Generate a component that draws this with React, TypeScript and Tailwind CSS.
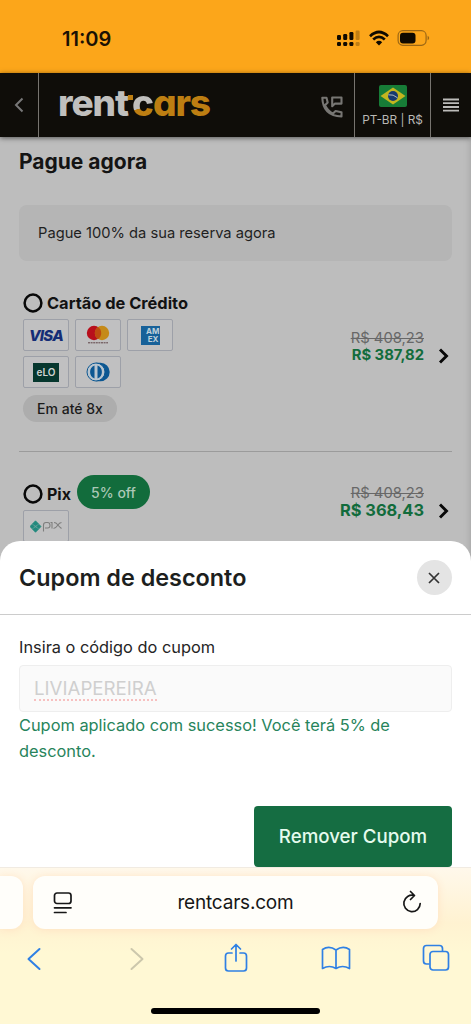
import type { ReactNode } from "react";

function StatusBar() {
  return (
    <div className="flex h-[73px] items-start justify-between bg-[#fca61a] pl-[62px] pr-[41px] pt-[26px]">
      <span className="text-[20px] font-semibold leading-[26px] text-[#1a1104]">11:09</span>
      <svg width="93" height="24" viewBox="0 0 93 24" fill="#100a00">
        <g>
          <rect x="0" y="9" width="4" height="5" rx="1.2" />
          <rect x="6.200" y="8" width="4" height="6" rx="1.2" />
          <rect x="12.400" y="6" width="4" height="8" rx="1.2" />
          <rect x="0" y="16" width="4" height="4" rx="1.2" />
          <rect x="6.200" y="16" width="4" height="4" rx="1.2" />
          <rect x="12.400" y="16" width="4" height="4" rx="1.2" />
          <rect x="18.600" y="4.500" width="4" height="9.500" rx="1.200" opacity=".25" />
          <rect x="18.600" y="16" width="4" height="4" rx="1.200" opacity=".25" />
        </g>
        <g fill="none" stroke="#100a00" strokeWidth="2.700">
          <path d="M33 10.200Q42 1.800 51 10.200" />
          <path d="M36.200 13.600Q42 8.200 47.800 13.600" />
        </g>
        <path d="M38.800 16.200Q42 13.400 45.200 16.200L42 19.500Z" />
        <rect x="61.100" y="4.700" width="28" height="14.600" rx="4.700" fill="none" stroke="#9b6715" strokeWidth="1.200" />
        <rect x="63" y="6.700" width="15.500" height="10.700" rx="3" />
        <path d="M90.600 9.700v4.600q1.600-.7 1.600-2.300t-1.600-2.300z" fill="#9b6715" />
      </svg>
    </div>
  );
}

function BrazilFlag() {
  return (
    <svg width="28" height="22" viewBox="0 0 28 22">
      <rect width="28" height="22" rx="2" fill="#177c37" />
      <path d="M14 2.500 26.500 11 14 19.500 1.500 11Z" fill="#c3b51f" />
      <circle cx="14" cy="11" r="5" fill="#173a70" />
      <path d="M9.300 9.800q5-.8 9.200 3" fill="none" stroke="#aeb9c0" strokeWidth="1" />
    </svg>
  );
}

function PhoneMessage() {
  return (
    <svg width="22" height="22" viewBox="0 0 22 22" fill="none" stroke="#777673" strokeWidth="2.100" strokeLinejoin="round">
      <path d="M1.300 1.700H5.500L6.700 6.500 4 9.200Q6.500 14.800 12 17.600L14.600 15 20.500 16.300V20.500Q2 19.800 1.300 1.700Z" />
      <path d="M11.200 1.500H20.500V7.600H14L11.200 10.200Z" />
    </svg>
  );
}

function Header() {
  return (
    <header className="relative z-10 flex h-[64px] bg-[#0f0d09] shadow-[0_1px_5px_rgba(0,0,0,0.55)]">
      <div className="flex w-[39px] items-center justify-center border-r border-[#77746f] pr-px">
        <svg width="10" height="16" viewBox="0 0 10 16" fill="none" stroke="#777" strokeWidth="2">
          <path d="M8.500 1.500 2 8l6.500 6.500" />
        </svg>
      </div>
      <div className="ml-[19px] flex-1 pt-[7px] text-[37px] font-extrabold leading-[46px] tracking-[-1.1px] text-[#c0bfbd]">
        <span className="relative inline-block whitespace-nowrap [font-feature-settings:'cv11']">
          rent
          <span className="ml-[4px] bg-[linear-gradient(165deg,#c0bfbd_0%,#c0bfbd_60%,#bd7e12_61%)] bg-clip-text text-transparent">c</span>
          <span className="text-[#bd7e12]">ars</span>
          <i className="absolute left-[70px] top-[15px] h-[5px] w-[5px] bg-[#bd7e12]" />
        </span>
      </div>
      <div className="flex w-[44px] items-center pl-[11px] pt-[3px]">
        <PhoneMessage />
      </div>
      <div className="flex w-[76px] flex-col items-center border-l border-[#77746f] pt-[12px]">
        <BrazilFlag />
        <span className="mt-[5px] whitespace-nowrap text-[11.8px] leading-[17px] text-[#b9b8b5]">PT-BR | R$</span>
      </div>
      <div className="flex w-[41px] items-center justify-center border-l border-[#77746f]">
        <svg width="18" height="14" viewBox="0 0 18 14" fill="#bcbbb9">
          <path d="M1 .5h16v1.900H1zM1 4.200h16v1.900H1zM1 8h16v1.900H1zM1 11.700h16v1.900H1z" />
        </svg>
      </div>
    </header>
  );
}

function Radio() {
  return (
    <svg width="20" height="20" viewBox="0 0 20 20" fill="none" stroke="#080808" strokeWidth="2.500" className="-mr-px shrink-0">
      <circle cx="10" cy="10" r="8.400" />
    </svg>
  );
}

function CardBox({ children }: { children: ReactNode }) {
  return (
    <div className="flex h-[32px] w-[46px] items-center justify-center rounded-[2px] border border-[#9da0a8] bg-[#c0c0c1]">
      {children}
    </div>
  );
}

function Visa() {
  return <span className="text-[15px] font-extrabold italic leading-none tracking-[-0.7px] text-[#142d76]">VISA</span>;
}

function Mastercard() {
  return (
    <svg width="24" height="20" viewBox="0 0 24 20">
      <circle cx="8" cy="8" r="7.200" fill="#b80f1c" />
      <circle cx="16" cy="8" r="7.200" fill="#c58a19" />
      <path d="M12 2a7.200 7.200 0 0 1 0 12 7.200 7.200 0 0 1 0-12" fill="#bd4b10" />
      <path d="M2 17.800h20" stroke="#5d4245" strokeDasharray="2 .6" />
    </svg>
  );
}

function Amex() {
  return (
    <div className="flex h-[19px] w-[19px] flex-col items-end justify-center overflow-hidden bg-[#176199] text-[8px] font-bold leading-[8px] text-[#bfd0da]">
      <span>AM</span>
      <span className="pr-px">EX</span>
    </div>
  );
}

function Elo() {
  return (
    <div className="flex h-[19px] w-[26px] items-center justify-center bg-[#06372e] text-[10px] font-semibold leading-none text-[#d0d4d2]">
      eLO
    </div>
  );
}

function Diners() {
  return (
    <svg width="24" height="20" viewBox="0 0 24 20">
      <path d="M10 .8h4.500a9 9 0 0 1 0 18.400H10z" fill="#0c5792" />
      <circle cx="10" cy="10" r="9" fill="#b9c5cf" stroke="#0c5792" strokeWidth="1" />
      <path d="M8.500 3.500a7 7 0 0 0 0 13zM11.500 3.500a7 7 0 0 1 0 13z" fill="#0c5792" />
    </svg>
  );
}

function Pix() {
  return (
    <svg width="33" height="15" viewBox="0 0 33 15">
      <path d="M5.500 1.800 8.500 4.800 5.500 7 2.500 4.800ZM5.500 8l3 2.300-3 3-3-3ZM0 7.500 2 5.300 4.700 7.500 2 9.800ZM11 7.500 9 5.300 6.300 7.500 9 9.800Z" fill="#23897e" stroke="#23897e" strokeWidth=".7" strokeLinejoin="round" />
      <g fill="none" stroke="#7e7e7e" strokeWidth="1.100">
        <path d="M13.500 12.500V6q0-2.500 2.500-2.500h1.500q2.500 0 2.500 2.800T17.500 9H15M20.500 3.500H22v6M24 3.500q2 0 3.500 2t4 4M31.500 3.500q-2 0-4 3t-4 3" />
      </g>
    </svg>
  );
}

function Chevron() {
  return (
    <svg width="12" height="16" viewBox="0 0 12 16" fill="none" stroke="#080808" strokeWidth="2.900">
      <path d="m2 1.500 6.500 6.500L2 14.500" />
    </svg>
  );
}

function Payment() {
  return (
    <main className="h-[426px] overflow-hidden bg-[#bdbdbd] px-[19px] shadow-[inset_-5px_0_5px_-3px_#aaa]">
      <h1 className="pt-[11px] text-[21px] font-bold leading-[27px] text-[#141414]">Pague agora</h1>
      <div className="mt-[30px] flex h-[56px] items-center rounded-[8px] bg-[#b5b5b5] pl-[19px] text-[14.7px] text-[#1f1f1f]">
        Pague 100% da sua reserva agora
      </div>
      <section className="flex h-[191px] items-start justify-between border-b border-[#9b9b9b] pl-[4px] pr-[2px] pt-[31px]">
        <div>
          <div className="flex h-[22px] items-center gap-[5px]">
            <Radio />
            <span className="whitespace-nowrap text-[16.4px] font-bold text-[#121212]">Cartão de Crédito</span>
          </div>
          <div className="mt-[5px] grid w-[150px] grid-cols-3 gap-x-[6px] gap-y-[5px]">
            <CardBox><Visa /></CardBox>
            <CardBox><Mastercard /></CardBox>
            <CardBox><Amex /></CardBox>
            <CardBox><Elo /></CardBox>
            <CardBox><Diners /></CardBox>
          </div>
          <div className="mt-[7px] flex h-[27px] w-[94px] items-center justify-center rounded-full bg-[#adadad] text-[14px] font-medium text-[#1b1b1b]">
            Em até 8x
          </div>
        </div>
        <div className="mt-[38px] flex items-end gap-[14px]">
          <div className="text-right">
            <p className="text-[14.8px] leading-[17px] text-[#686868] line-through">R$ 408,23</p>
            <p className="text-[14.8px] font-bold leading-[17px] text-[#126c3c]">R$ 387,82</p>
          </div>
          <Chevron />
        </div>
      </section>
      <section className="flex items-start justify-between pl-[4px] pr-[2px] pt-[23px]">
        <div>
          <div className="flex h-[34px] items-center">
            <div className="pt-[3px]"><div className="flex"><Radio /></div></div>
            <span className="ml-[5px] w-[30px] pt-[4px] text-[16px] font-bold text-[#121212]">Pix</span>
            <span className="flex h-[34px] w-[73px] items-center justify-center rounded-full bg-[#126c3c] text-[14px] font-medium text-[#abc8b6]">5% off</span>
          </div>
          <div className="mt-px"><CardBox><Pix /></CardBox></div>
        </div>
        <div className="mt-[10px] flex items-end gap-[14px]">
          <div className="text-right">
            <p className="text-[14.8px] leading-[17px] text-[#686868] line-through">R$ 408,23</p>
            <p className="text-[16.400px] font-bold leading-[17px] text-[#126c3c]">R$ 368,43</p>
          </div>
          <Chevron />
        </div>
      </section>
    </main>
  );
}

function CouponSheet() {
  return (
    <section className="relative z-10 -mt-[22px] h-[326px] rounded-t-[20px] bg-white">
      <div className="flex h-[74px] items-center justify-between border-b border-[#ccc] px-[19px]">
        <h2 className="pt-px text-[23.4px] font-semibold text-[#1d1f1e]">Cupom de desconto</h2>
        <button className="flex h-[35px] w-[35px] items-center justify-center rounded-full bg-[#e4e4e4]" aria-label="Fechar">
          <svg width="12" height="12" viewBox="0 0 12 12" stroke="#333" strokeWidth="1.700" className="-ml-px">
            <path d="m1 1 10 10M11 1 1 11" />
          </svg>
        </button>
      </div>
      <div className="px-[19px] pt-[18px]">
        <p className="text-[16.350px] leading-[28px] text-[#252525]">Insira o código do cupom</p>
        <div className="mt-[4px] flex h-[47px] items-center rounded-[4px] border border-[#eee] bg-[#fafafa] pl-[14px] pt-[2px]">
          <span className="border-b-2 border-dotted border-[#f7c0c0] text-[18.7px] leading-[20px] text-[#cfcfcf]">LIVIAPEREIRA</span>
        </div>
        <p className="whitespace-nowrap text-[16.380px] leading-[26px] text-[#27845b]">
          Cupom aplicado com sucesso! Você terá 5% de<br />desconto.
        </p>
        <button className="ml-auto mt-[42px] flex h-[61px] w-[198px] items-center justify-center rounded-[4px] bg-[#156d42] pt-px text-[18.7px] font-medium text-[#e5fbee]">
          Remover Cupom
        </button>
      </div>
    </section>
  );
}

function SafariBar() {
  return (
    <footer className="h-[157px] border-t border-[#f1ebe2] bg-[linear-gradient(#fff8eb_0px,#fff2d1_55px,#fff8d4_85px)]">
      <div className="flex gap-[10px] overflow-hidden pb-[10px] pt-[8px]">
        <div className="h-[53px] w-[23px] rounded-r-[12px] bg-[#fffefa] shadow-[0_1px_8px_#ffe2c4]" />
        <div className="flex h-[53px] w-[405px] items-center justify-between rounded-[12px] bg-[#fffefa] pl-[20px] pr-[15px] shadow-[0_1px_8px_#ffe2c4]">
          <svg width="20" height="24" viewBox="0 0 20 24" fill="none" stroke="#171717" strokeWidth="1.700" strokeLinecap="round">
            <rect x="1.500" y="2" width="16.500" height="10.500" rx="2.500" />
            <path d="M1.500 16.800H18M1.500 21.500H13" />
          </svg>
          <span className="pr-[3px] pt-[2px] text-[19px] tracking-[-0.2px] text-[#171717]">rentcars.com</span>
          <svg width="22" height="25" viewBox="0 0 22 25" fill="none" stroke="#171717" strokeWidth="1.700" strokeLinecap="round" strokeLinejoin="round">
            <path d="M13.200 5.500A8.200 8.200 0 1 0 19.200 13.500M9.500 1.500l4 4-4 4" />
          </svg>
        </div>
      </div>
      <div className="flex h-[40px] items-center justify-between pl-[27px] pr-[21px] text-[#2f80e4]">
        <svg width="14" height="24" viewBox="0 0 14 24" fill="none" stroke="currentColor" strokeWidth="2" strokeLinecap="round" strokeLinejoin="round"><path d="M12.500 2 1.500 12l11 10" /></svg>
        <svg width="14" height="24" viewBox="0 0 14 24" fill="none" stroke="#ccc7ac" strokeWidth="2" strokeLinecap="round" strokeLinejoin="round" className="ml-[6px]"><path d="m1.500 2 11 10-11 10" /></svg>
        <svg width="24" height="30" viewBox="0 0 24 30" fill="none" stroke="currentColor" strokeWidth="1.700" strokeLinecap="round" strokeLinejoin="round" className="-ml-[2px] -mt-[2px]"><path d="M8 10H4.500Q1.500 10 1.500 13v12q0 3 3 3h15q3 0 3-3V13q0-3-3-3H16M12 18V2M7.500 6 12 1.500 16.500 6" /></svg>
        <svg width="30" height="24" viewBox="0 0 30 24" fill="none" stroke="currentColor" strokeWidth="1.700" strokeLinejoin="round" className="-ml-[10px] -mt-[2px]"><path d="M15 4Q8-.8 1.500 3.500v19q7-4 13.500 0 6.500-4 13.500 0v-19Q22-.8 15 4Zm0 0v18.500" /></svg>
        <svg width="28" height="28" viewBox="0 0 28 28" fill="none" stroke="currentColor" strokeWidth="1.700" strokeLinejoin="round" className="-ml-[11px] -mt-[2px]"><rect x="8" y="7.500" width="18.500" height="18.500" rx="3" /><path d="M20.500 7V4.500q0-3-3-3H4.500q-3 0-3 3v12.500q0 3 3 3H7.500" /></svg>
      </div>
      <div className="mx-auto mt-[29px] h-[6px] w-[169px] rounded-full bg-black" />
    </footer>
  );
}

export default function App() {
  return (
    <div className="h-[1024px] w-[471px] overflow-hidden bg-white font-[Inter,sans-serif]">
      <StatusBar />
      <Header />
      <Payment />
      <CouponSheet />
      <SafariBar />
    </div>
  );
}
